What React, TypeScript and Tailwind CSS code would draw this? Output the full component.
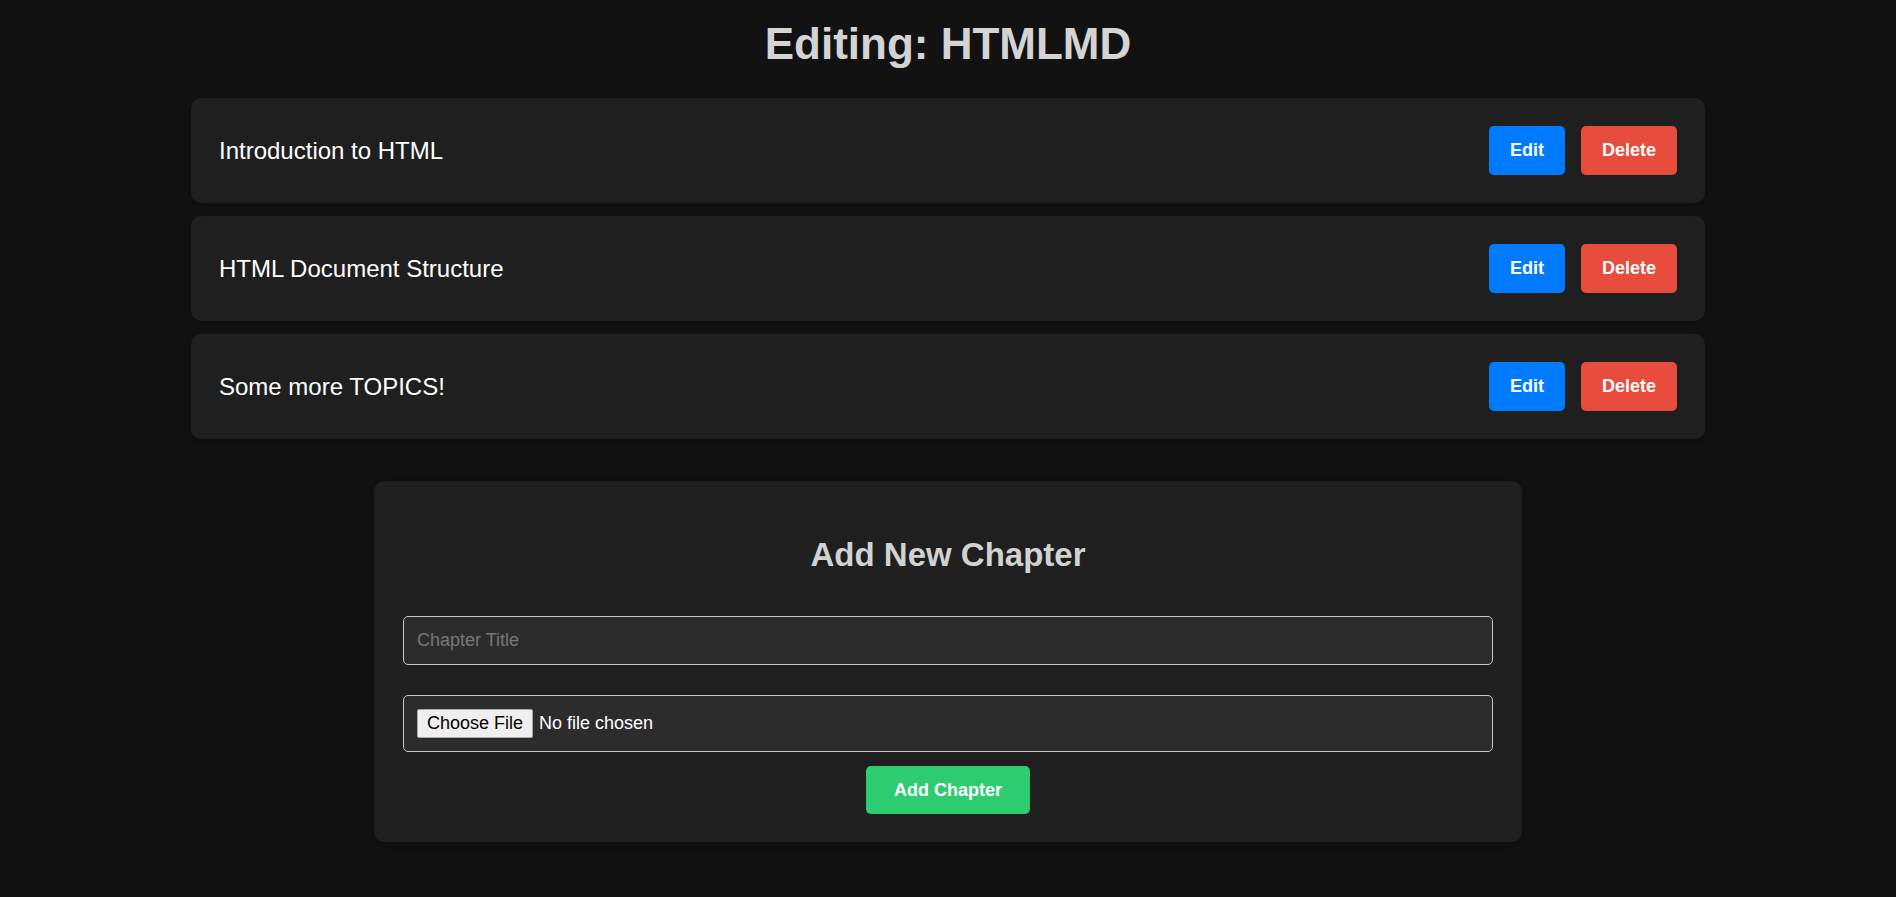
const chapters = ["Introduction to HTML", "HTML Document Structure", "Some more TOPICS!"];

function ChapterRow({ title }: { title: string }) {
  return (
    <div className="flex h-[105px] items-center justify-between rounded-[10px] bg-[#1f1f1f] px-[28px] shadow-[0_2px_6px_rgba(0,0,0,0.3)]">
      <span className="text-[24px] text-white">{title}</span>
      <div className="flex gap-[16px]">
        <button className="h-[49px] w-[76px] rounded-[5px] bg-[#007bff] text-[18px] font-bold text-white">Edit</button>
        <button className="h-[49px] w-[96px] rounded-[5px] bg-[#e74c3c] text-[18px] font-bold text-white">Delete</button>
      </div>
    </div>
  );
}

export default function App() {
  return (
    <div className="min-h-screen bg-[#121212] pt-[18px] pb-[40px] font-['Liberation_Sans',Arial,sans-serif]">
      <h1 className="text-center text-[44px] leading-[52px] font-bold text-[#d4d4d4]">Editing: HTMLMD</h1>

      <div className="mx-auto mt-[28px] flex w-[1514px] flex-col gap-[13px]">
        {chapters.map((c) => (
          <ChapterRow key={c} title={c} />
        ))}
      </div>

      <form
        className="mx-auto mt-[42px] flex w-[1148px] flex-col rounded-[10px] bg-[#1f1f1f] px-[29px] pt-[29px] pb-[28px] shadow-[0_2px_8px_rgba(0,0,0,0.4)]"
        onSubmit={(e) => e.preventDefault()}
      >
        <h2 className="mt-[26px] text-center text-[33px] leading-[38px] font-bold text-[#d2d2d2]">Add New Chapter</h2>
        <input
          type="text"
          placeholder="Chapter Title"
          className="mt-[42px] h-[49px] w-full rounded-[5px] border border-[#c8c8c8] bg-[#2c2c2c] px-[13px] text-[18px] text-white outline-none placeholder:text-[#777]"
        />
        <div className="mt-[30px] flex h-[57px] w-full items-center rounded-[5px] border border-[#c8c8c8] bg-[#2c2c2c] px-[13px]">
          <input
            type="file"
            className="w-full text-[18px] text-white file:mr-[6px] file:h-[29px] file:rounded-[2px] file:border file:border-[#a8a8a8] file:bg-[#efefef] file:px-[9px] file:text-[18px] file:text-black"
          />
        </div>
        <button
          type="submit"
          className="mx-auto mt-[14px] h-[48px] w-[164px] rounded-[5px] bg-[#2ecc71] text-[18px] font-bold text-white"
        >
          Add Chapter
        </button>
      </form>
    </div>
  );
}
